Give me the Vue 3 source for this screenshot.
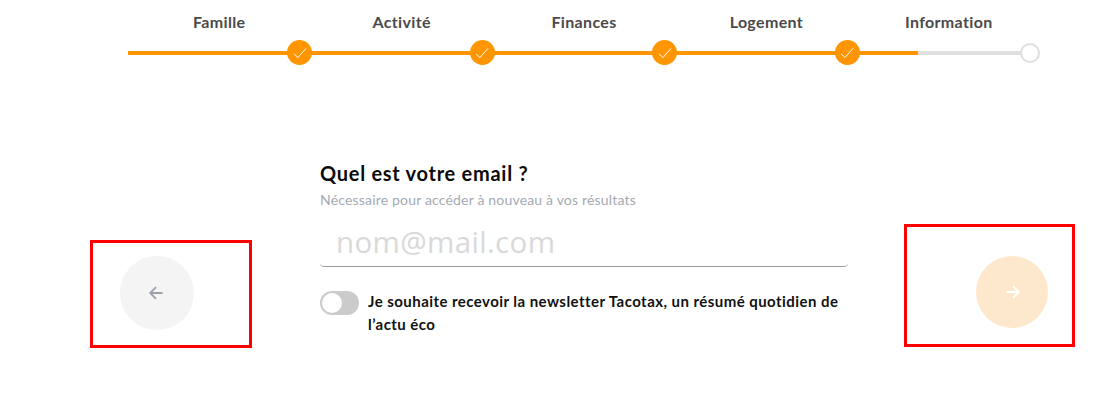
<template>
  <div class="page">
    <div class="stepper">
      <div class="track"><div class="track-fill"></div></div>
      <div v-for="(step, index) in steps" :key="step" class="step">
        <span class="step-label">{{ step }}</span>
        <span class="dot" :class="{ done: index < 4 }">
          <svg v-if="index < 4" width="14" height="14" viewBox="0 0 14 14">
            <path d="M1 7.8 4.9 11.6 13 2.4" fill="none" stroke="#fff" stroke-width="1" />
          </svg>
        </span>
      </div>
    </div>

    <div class="content">
      <div class="nav nav-back">
        <button class="round back" type="button">
          <svg width="16" height="16" viewBox="0 0 16 16">
            <path d="M14.5 8H2.5M8 2.2 2.2 8 8 13.8" fill="none" stroke="#9aa1ab" stroke-width="1.8" />
          </svg>
        </button>
        <div class="annotation annotation-back"></div>
      </div>

      <form class="form" @submit.prevent>
        <h2 class="title">Quel est votre email ?</h2>
        <p class="hint">Nécessaire pour accéder à nouveau à vos résultats</p>
        <input class="email" type="email" placeholder="nom@mail.com" />
        <div class="newsletter">
          <span class="toggle"><span class="knob"></span></span>
          <span class="newsletter-text">Je souhaite recevoir la newsletter Tacotax, un résumé quotidien de l’actu éco</span>
        </div>
      </form>

      <div class="nav nav-next">
        <button class="round next" type="button">
          <svg width="16" height="16" viewBox="0 0 16 16">
            <path d="M1.5 8h12M8 2.2 13.8 8 8 13.8" fill="none" stroke="#fff" stroke-width="1.8" />
          </svg>
        </button>
        <div class="annotation annotation-next"></div>
      </div>
    </div>
  </div>
</template>

<script setup>
const steps = ["Famille", "Activité", "Finances", "Logement", "Information"];
</script>

<style>
html,
body {
  margin: 0;
  background: #fff;
}
</style>

<style scoped>
.page {
  width: 1107px;
  height: 409px;
  overflow: hidden;
  font-family: Lato, "Liberation Sans", sans-serif;
}
.stepper {
  position: relative;
  display: grid;
  grid-template-columns: repeat(5, 1fr);
  width: 912px;
  height: 67px;
  margin-left: 128px;
  padding-top: 12px;
}
.track {
  position: absolute;
  left: 0;
  right: 10px;
  top: 51px;
  height: 4px;
  background: #dfdfdf;
}
.track-fill {
  width: 790px;
  height: 100%;
  background: #ff9500;
}
.step {
  position: relative;
  text-align: center;
}
.step-label {
  font-size: 16px;
  font-weight: 700;
  line-height: 18px;
  color: #4a4a4a;
  letter-spacing: 0.35px;
}
.dot {
  position: absolute;
  top: 28px;
  right: -2px;
  width: 25px;
  height: 25px;
  border-radius: 50%;
  display: flex;
  align-items: center;
  justify-content: center;
}
.dot.done {
  background: #ff9500;
}
.step:last-child .dot {
  top: 31px;
  right: 0;
  width: 20px;
  height: 20px;
  box-sizing: border-box;
  background: #fff;
  border: 2px solid #dfdfdf;
}
.content {
  display: flex;
  align-items: flex-start;
  margin-top: 80px;
  padding-left: 120px;
}
.nav {
  position: relative;
  margin-top: 97px;
}
.nav-back {
  width: 200px;
}
.nav-next {
  margin-left: 128px;
}
.round {
  display: flex;
  align-items: center;
  justify-content: center;
  padding: 0;
  border: 0;
  border-radius: 50%;
}
.back {
  width: 74px;
  height: 74px;
  background: #f4f4f4;
  padding-right: 3px;
}
.next {
  width: 72px;
  height: 72px;
  background: #fde8cc;
  padding-left: 2px;
}
.annotation {
  position: absolute;
  box-sizing: border-box;
  border: 3px solid #ff0000;
}
.annotation-back {
  left: -30px;
  top: -16px;
  width: 162px;
  height: 108px;
}
.annotation-next {
  left: -72px;
  top: -32px;
  width: 171px;
  height: 123px;
}
.form {
  width: 528px;
  padding-top: 2px;
}
.title {
  margin: 0;
  font-size: 20px;
  font-weight: 700;
  line-height: 24px;
  color: #0b0b0b;
  letter-spacing: 0.72px;
}
.hint {
  margin: 6px 0 0;
  font-size: 14px;
  line-height: 18px;
  color: #a3aab2;
  letter-spacing: 0.18px;
}
.email {
  display: block;
  box-sizing: border-box;
  width: 100%;
  height: 50px;
  margin-top: 8px;
  padding: 0 16px;
  border: 0;
  border-bottom: 1px solid #9b9fa5;
  border-radius: 0 0 4px 4px;
  outline: none;
  font-family: "Open Sans", sans-serif;
  font-size: 29.5px;
  letter-spacing: 0.35px;
}
.email::placeholder {
  color: #d9d9d9;
  opacity: 1;
}
.newsletter {
  display: flex;
  align-items: flex-start;
  gap: 9px;
  margin-top: 23px;
}
.toggle {
  flex: none;
  position: relative;
  width: 39px;
  height: 24px;
  margin-top: 1px;
  border-radius: 12px;
  background: #cbcbcb;
}
.knob {
  position: absolute;
  left: 2px;
  top: 2px;
  width: 20px;
  height: 20px;
  border-radius: 50%;
  background: #fff;
}
.newsletter-text {
  font-size: 15px;
  font-weight: 700;
  line-height: 23px;
  color: #111;
  letter-spacing: 0.45px;
}
</style>
